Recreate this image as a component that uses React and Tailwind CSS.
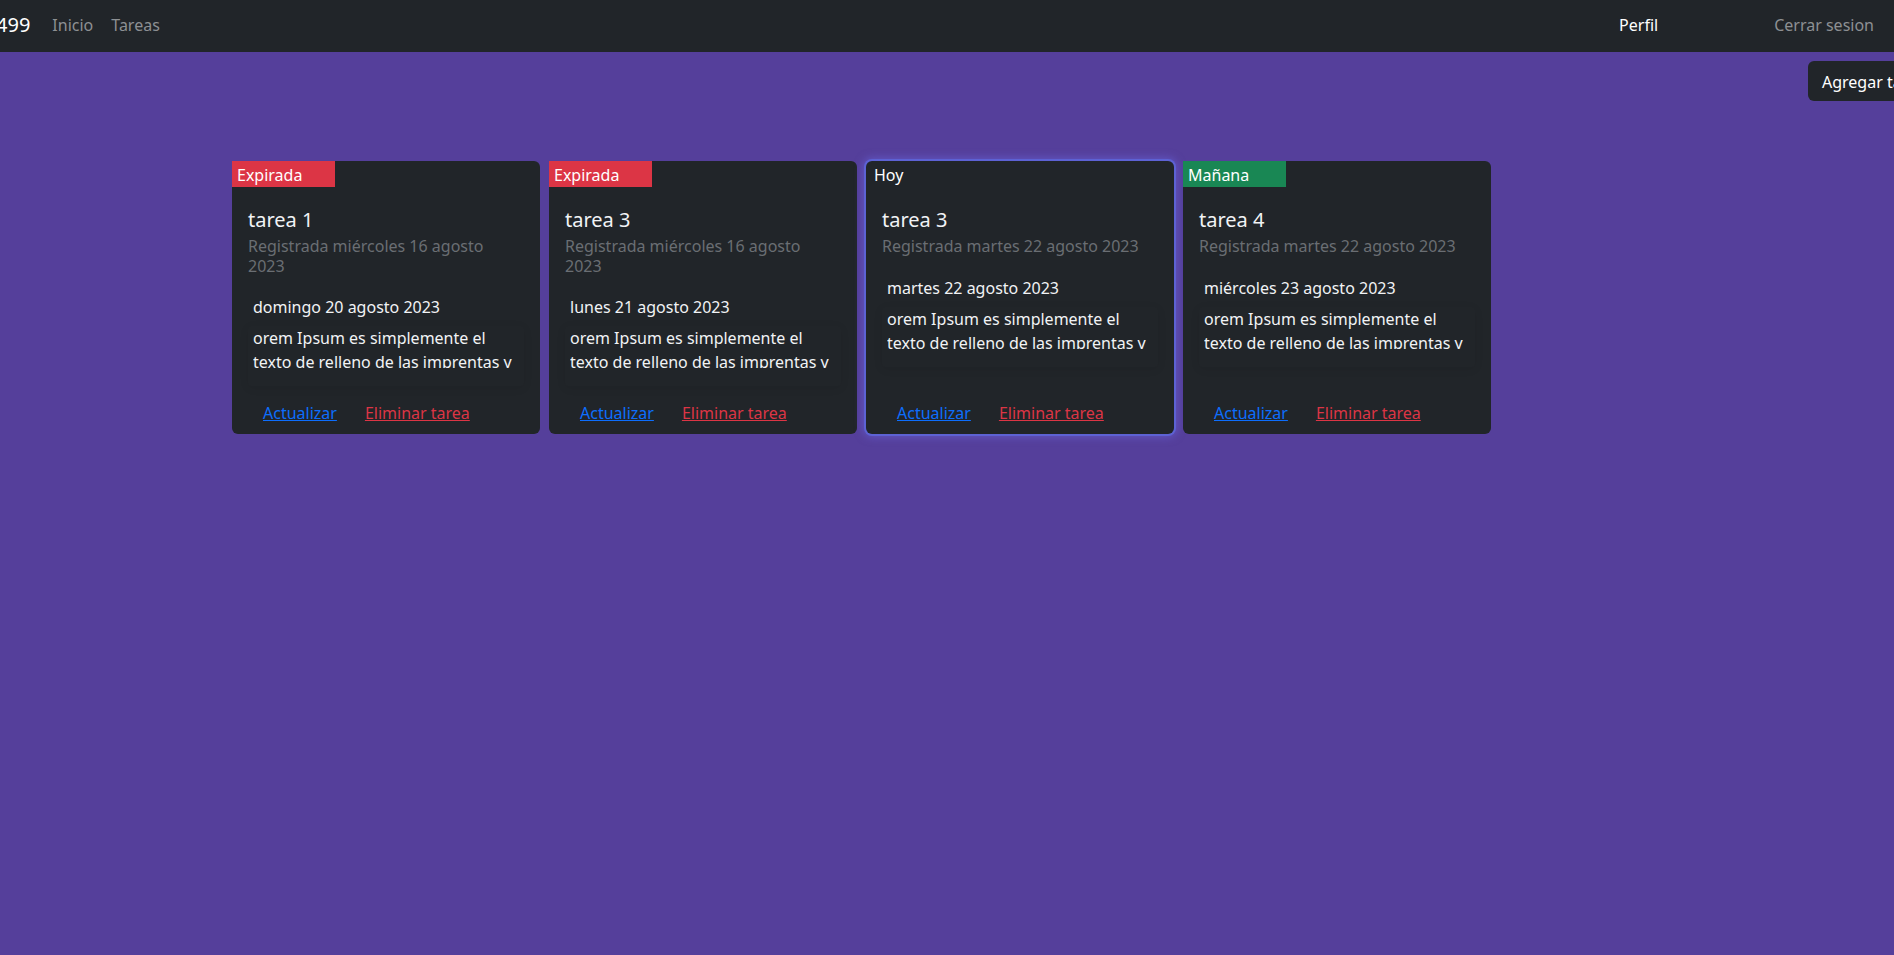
const font = { fontFamily: '"Noto Sans", "Liberation Sans", sans-serif' };

const tasks = [
  {
    id: 1,
    badge: 'Expirada',
    badgeClass: 'bg-[#dc3545] pl-[5px]',
    title: 'tarea 1',
    registered: 'Registrada miércoles 16 agosto 2023',
    due: 'domingo 20 agosto 2023',
  },
  {
    id: 2,
    badge: 'Expirada',
    badgeClass: 'bg-[#dc3545] pl-[5px]',
    title: 'tarea 3',
    registered: 'Registrada miércoles 16 agosto 2023',
    due: 'lunes 21 agosto 2023',
  },
  {
    id: 3,
    badge: 'Hoy',
    badgeClass: 'pl-[8px]',
    title: 'tarea 3',
    registered: 'Registrada martes 22 agosto 2023',
    due: 'martes 22 agosto 2023',
    active: true,
  },
  {
    id: 4,
    badge: 'Mañana',
    badgeClass: 'bg-[#198754] pl-[5px]',
    title: 'tarea 4',
    registered: 'Registrada martes 22 agosto 2023',
    due: 'miércoles 23 agosto 2023',
  },
];

function TaskCard({ task }) {
  return (
    <div
      className={
        'w-[308px] h-[273px] shrink-0 flex flex-col bg-[#212529] rounded-[6px] ' +
        (task.active
          ? 'ring-2 ring-[#5d62d4] shadow-[0_0_9px_3px_rgba(110,110,235,0.5)]'
          : '')
      }
    >
      <div className={'w-1/3 h-[26px] pt-[2px] leading-[24px] text-[16px] text-white ' + task.badgeClass}>
        {task.badge}
      </div>
      <div className="flex-1 flex flex-col px-4 pt-[21px] pb-[9px]">
        <h5 className="text-[20px] leading-[24px] text-[#f1f3f5] mb-[5px]">{task.title}</h5>
        <h6 className="text-[16px] leading-[19.5px] text-[#6a6e73]">{task.registered}</h6>
        <p className="mt-[19px] pl-[5px] text-[16px] leading-[24px] text-[#f1f3f5]">{task.due}</p>
        <div className="mt-[7px] pl-[5px] rounded shadow-[0_2px_10px_rgba(0,0,0,0.08)] pb-[18px]">
          <p className="h-[42px] overflow-hidden text-[16px] leading-[24px] text-[#f1f3f5]">
            <span className="block whitespace-nowrap">orem Ipsum es simplemente el</span>
            <span className="block whitespace-nowrap">texto de relleno de las imprentas y</span>
          </p>
        </div>
        <div className="mt-auto flex gap-[28px] pl-[15px] text-[16px] leading-[24px]">
          <a href="#" className="text-[#0d6efd] underline">Actualizar</a>
          <a href="#" className="text-[#dc3545] underline">Eliminar tarea</a>
        </div>
      </div>
    </div>
  );
}

export default function App() {
  return (
    <div className="min-h-screen w-full overflow-hidden bg-[#553f9b]" style={font}>
      <nav className="h-[52px] pb-[2px] bg-[#212529] flex items-center whitespace-nowrap">
        <span className="-ml-[4px] text-[20px] text-white mr-[22px]">499</span>
        <a href="#" className="text-[16px] text-[#8d9093] mr-[18px]">Inicio</a>
        <a href="#" className="text-[16px] text-[#8d9093]">Tareas</a>
        <div className="flex-1" />
        <a href="#" className="text-[16px] text-white mr-[116px]">Perfil</a>
        <a href="#" className="text-[16px] text-[#8d9093] mr-[20px]">Cerrar sesion</a>
      </nav>

      <div className="flex justify-end pt-[9px]">
        <button className="-mr-[46px] h-[40px] px-[14px] pt-[2px] rounded-[6px] bg-[#212529] text-white text-[16px] whitespace-nowrap">
          Agregar tarea
        </button>
      </div>

      <div className="flex gap-[9px] ml-[232px] mt-[60px]">
        {tasks.map((t) => (
          <TaskCard key={t.id} task={t} />
        ))}
      </div>
    </div>
  );
}
